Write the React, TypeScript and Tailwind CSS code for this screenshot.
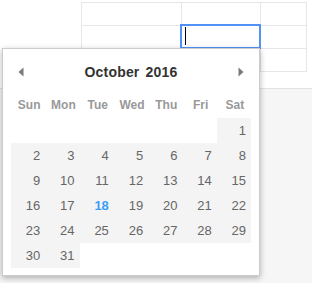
import React from 'react';

const weekdays = ['Sun', 'Mon', 'Tue', 'Wed', 'Thu', 'Fri', 'Sat'];

// October 2016 starts on a Saturday
const cells: (number | null)[] = [
    ...Array(6).fill(null),
    ...Array.from({ length: 31 }, (_, i) => i + 1),
    ...Array(5).fill(null),
];

function Arrow({ dir }: { dir: 'left' | 'right' }) {
    return (
        <svg width="6" height="10" viewBox="0 0 6 10" className="block">
            {dir === 'left' ? (
                <path d="M5.5 0.5 L0.5 5 L5.5 9.5 Z" fill="#7a7a7a" />
            ) : (
                <path d="M0.5 0.5 L5.5 5 L0.5 9.5 Z" fill="#7a7a7a" />
            )}
        </svg>
    );
}

export default function App() {
    const today = 18;

    return (
        <div
            className="relative w-[312px] h-[283px] overflow-hidden bg-white flex flex-col"
            style={{ fontFamily: '"Liberation Sans", Arial, sans-serif' }}
        >
            <div className="h-[88px] pl-[81px] pt-[2px] shrink-0">
                <div className="grid grid-cols-[100px_79px_46px] border-l border-t border-[#e6e6e6] w-fit">
                    {Array.from({ length: 9 }).map((_, i) => (
                        <div key={i} className="h-[23px] border-r border-b border-[#e6e6e6]" />
                    ))}
                </div>
            </div>
            <div className="flex-1 bg-[#f6f6f6] border-t border-[#e2e2e2]" />

            {/* active cell */}
            <div className="absolute left-[180px] top-[24px] w-[81px] h-[25px] border-2 border-[#5292f7]">
                <div className="absolute left-[3px] top-[1px] w-px h-[18px] bg-black" />
            </div>

            {/* date picker */}
            <div className="absolute left-[2px] top-[48px] w-[258px] h-[228px] bg-white border border-[#cccccc] shadow-[0_2px_6px_rgba(0,0,0,0.3)]">
                <div className="h-[44px] pt-[2px] flex items-center px-[15px]">
                    <Arrow dir="left" />
                    <div className="flex-1 text-center text-[14px] font-bold text-[#333] tracking-[0.2px] [word-spacing:2px]">
                        October 2016
                    </div>
                    <Arrow dir="right" />
                </div>
                <div className="ml-[8px] w-[240px] grid grid-cols-7">
                    {weekdays.map((d) => (
                        <div key={d} className="h-[25px] leading-[25px] text-center pl-[2px] text-[12px] font-bold text-[#999]">
                            {d}
                        </div>
                    ))}
                    {cells.map((n, i) => (
                        <div
                            key={i}
                            className={`h-[25px] leading-[25px] text-right pr-[5px] text-[13px] ${
                                n === null ? 'bg-white' : 'bg-[#f4f4f4]'
                            } ${n === today ? 'font-bold text-[#3d9df5]' : 'text-[#666]'}`}
                        >
                            {n ?? ''}
                        </div>
                    ))}
                </div>
            </div>
        </div>
    );
}
